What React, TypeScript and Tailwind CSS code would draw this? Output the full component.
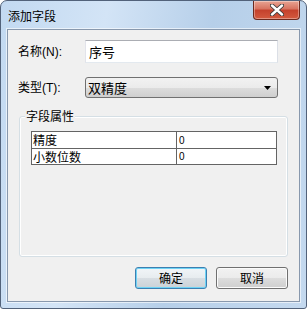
const cjk = "font-['Microsoft_YaHei','Noto_Sans_CJK_SC',sans-serif]";
const latin = "font-['Liberation_Sans','Noto_Sans_CJK_SC',sans-serif]";

const rows = [
  { name: "精度", value: "0" },
  { name: "小数位数", value: "0" },
];

function CloseButton() {
  return (
    <div className="flex h-[19px] w-[47px] items-center justify-center rounded-b-[4px] border border-t-0 border-[#6b2a1f] bg-[linear-gradient(#e8a493_0%,#d7725f_45%,#c4412c_50%,#d35a3f_100%)] shadow-[inset_0_0_0_1px_rgba(255,255,255,0.35)]">
      <svg width="14" height="12" viewBox="0 0 14 12">
        <path
          d="M2 1.5 L12 10.5 M12 1.5 L2 10.5"
          stroke="#3a3a3a"
          strokeWidth="4.2"
          strokeLinecap="round"
        />
        <path
          d="M2 1.5 L12 10.5 M12 1.5 L2 10.5"
          stroke="#ffffff"
          strokeWidth="2.4"
          strokeLinecap="round"
        />
      </svg>
    </div>
  );
}

function Label({ text, hotkey }: { text: string; hotkey: string }) {
  return (
    <span className={`w-[67px] text-[12px] text-black ${cjk}`}>
      {text}
      <span className={latin}>({hotkey}):</span>
    </span>
  );
}

function DialogButton({ label, primary }: { label: string; primary?: boolean }) {
  return (
    <button
      className={`flex h-[22px] w-[72px] items-center justify-center rounded-[3px] border text-[12px] text-black ${cjk} ${
        primary
          ? "border-[#3c7fb1] bg-[linear-gradient(#f1f5f8_0%,#e7ecef_50%,#d8dee3_50%,#cbd2d7_100%)] shadow-[inset_0_0_0_1px_#6fd3f5]"
          : "border-[#707070] bg-[linear-gradient(#f2f2f2_0%,#ebebeb_50%,#dddddd_50%,#cfcfcf_100%)] shadow-[inset_0_0_0_1px_#fbfbfb]"
      }`}
    >
      {label}
    </button>
  );
}

export default function App() {
  return (
    <div className="flex h-[309px] w-[307px] flex-col overflow-hidden rounded-t-[7px] rounded-b-[3px] border border-[#52627a] bg-[linear-gradient(100deg,#c2d9f1_0%,#d3e4f6_30%,#b6cfe9_60%,#c4d9ef_100%)] px-[6px]">
      {/* title bar */}
      <div className="flex h-[28px] shrink-0 items-start justify-between">
        <span className={`pl-[1px] pt-[6px] text-[12px] text-black ${cjk}`}>添加字段</span>
        <CloseButton />
      </div>

      {/* client area */}
      <div className="flex h-[273px] shrink-0 flex-col border border-[#8898ad] bg-[#f0f0f0] shadow-[0_0_0_1px_rgba(255,255,255,0.6)]">
        <div className="mt-[10px] flex h-[23px] items-center pl-[10px]">
          <Label text="名称" hotkey="N" />
          <div className="flex h-[23px] w-[193px] items-center border border-[#abadb3] border-b-[#e3e9ef] border-l-[#e2e3ea] border-r-[#dbdfe6] bg-white pl-[3px]">
            <span className={`text-[13px] text-black ${cjk}`}>序号</span>
          </div>
        </div>

        <div className="mt-[14px] flex h-[21px] items-center pl-[10px]">
          <Label text="类型" hotkey="T" />
          <div className="flex h-[21px] w-[193px] items-center justify-between rounded-[3px] border border-[#707070] bg-[linear-gradient(#f2f2f2_0%,#ebebeb_50%,#dddddd_50%,#cfcfcf_100%)] pl-[2px] pr-[6px]">
            <span className={`text-[13px] text-black ${cjk}`}>双精度</span>
            <svg width="7" height="4" viewBox="0 0 7 4">
              <path d="M0 0 H7 L3.5 4 Z" fill="#000" />
            </svg>
          </div>
        </div>

        {/* group box */}
        <div className="relative ml-[11px] mt-[18px] h-[141px] w-[269px] rounded-[3px] border border-[#d5dfe5] shadow-[inset_0_0_0_1px_#ffffff]">
          <span
            className={`absolute left-[5px] top-[-9px] bg-[#f0f0f0] px-[1px] text-[12px] leading-[16px] text-black ${cjk}`}
          >
            字段属性
          </span>
          <div className="ml-[11px] mt-[14px] w-[246px] border border-[#646464] bg-white">
            {rows.map((r, i) => (
              <div
                key={r.name}
                className={`flex h-[16px] ${i > 0 ? "border-t border-[#646464]" : ""}`}
              >
                <div
                  className={`flex w-[145px] items-center border-r border-[#646464] pl-[1px] text-[12px] leading-none text-black ${cjk}`}
                >
                  {r.name}
                </div>
                <div className={`flex flex-1 items-center pl-[2px] text-[10px] text-black ${latin}`}>
                  {r.value}
                </div>
              </div>
            ))}
          </div>
        </div>

        <div className="mr-[11px] mt-[10px] flex justify-end gap-[9px]">
          <DialogButton label="确定" primary />
          <DialogButton label="取消" />
        </div>
      </div>
    </div>
  );
}
